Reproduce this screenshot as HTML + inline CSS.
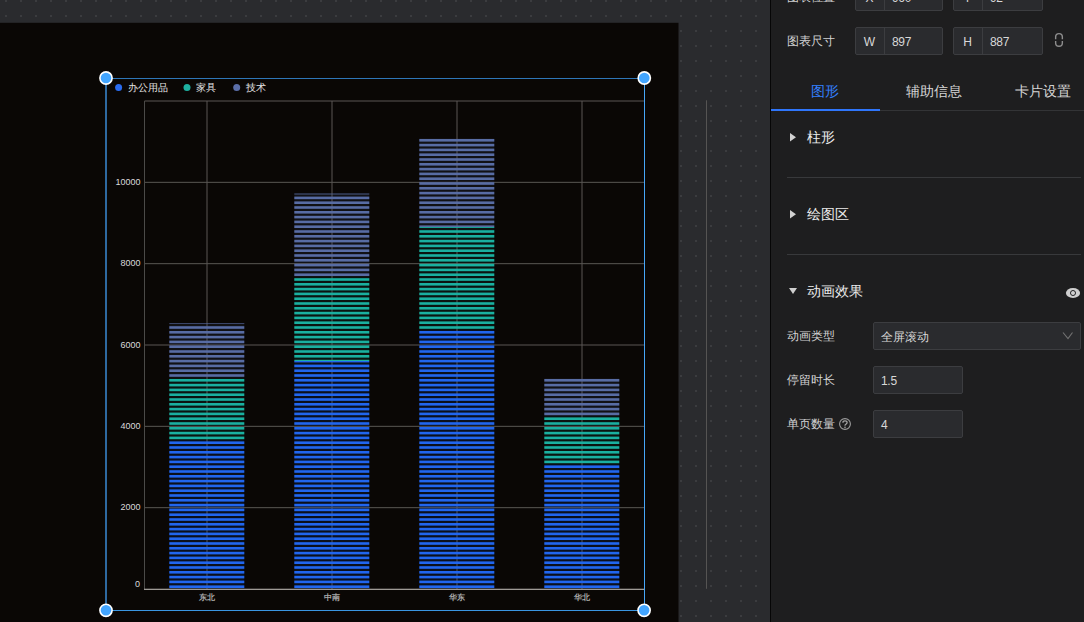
<!DOCTYPE html>
<html><head><meta charset="utf-8">
<style>
*{margin:0;padding:0;box-sizing:border-box}
html,body{width:1084px;height:622px;overflow:hidden;background:#2a2b2e;font-family:"Liberation Sans",sans-serif}
.abs{position:absolute}
#canvas{position:absolute;left:0;top:0;width:770px;height:622px}
#sep{position:absolute;left:770px;top:0;width:1px;height:622px;background:#060606}
#panel{position:absolute;left:771px;top:0;width:313px;height:622px;background:#1e1e1f;overflow:hidden;color:#d6d6d6}
.lbl{position:absolute;font-size:12px;line-height:16px;white-space:nowrap;color:#d2d2d2}
.box{position:absolute;background:#2a2b2e;border:1px solid #3c3d40;border-radius:2px}
.txt{position:absolute;font-size:12px;line-height:16px;padding-top:1px;white-space:nowrap;color:#d8d8d8}
.tab{position:absolute;top:82px;width:109px;text-align:center;font-size:14px;line-height:18px;color:#d6d6d6}
.sec{position:absolute;left:36px;font-size:14px;line-height:18px;color:#ececec}
.div{position:absolute;left:16px;width:294px;height:1px;background:#38393b}
</style></head><body>
<svg id="canvas" width="770" height="622" viewBox="0 0 770 622">
<defs>
<pattern id="dots" x="0" y="0" width="15" height="15" patternUnits="userSpaceOnUse">
<rect x="5" y="0" width="2" height="2" fill="#3b3c3f"/>
</pattern>
</defs>
<rect x="0" y="0" width="770" height="622" fill="#2a2b2e"/>
<rect x="0" y="0" width="770" height="622" fill="url(#dots)"/>
<rect x="0" y="22.8" width="678.5" height="600" fill="#0a0705"/>
<rect x="706" y="100.3" width="1" height="488.5" fill="#555453"/>

<!-- grid -->
<g fill="#5a5754">
<rect x="144.5" y="100.5" width="500" height="1"/>
<rect x="144.5" y="181.83" width="500" height="1"/>
<rect x="144.5" y="263.17" width="500" height="1"/>
<rect x="144.5" y="344.5" width="500" height="1"/>
<rect x="144.5" y="425.83" width="500" height="1"/>
<rect x="144.5" y="507.17" width="500" height="1"/>
</g>
<rect x="144" y="101" width="1" height="488" fill="#4b4a48"/>
<g fill="#5a5754">
<rect x="206.5" y="101" width="1" height="488"/>
<rect x="331.5" y="101" width="1" height="488"/>
<rect x="456.5" y="101" width="1" height="488"/>
<rect x="581.5" y="101" width="1" height="488"/>
</g>
<rect x="169.30" y="323.40" width="75.00" height="54.50" fill="rgba(90,112,168,0.1)"/>
<rect x="169.30" y="374.20" width="75.00" height="2.60" fill="#586ca4"/>
<rect x="169.30" y="369.40" width="75.00" height="2.60" fill="#586ca4"/>
<rect x="169.30" y="364.60" width="75.00" height="2.60" fill="#586ca4"/>
<rect x="169.30" y="359.80" width="75.00" height="2.60" fill="#586ca4"/>
<rect x="169.30" y="355.00" width="75.00" height="2.60" fill="#586ca4"/>
<rect x="169.30" y="350.20" width="75.00" height="2.60" fill="#586ca4"/>
<rect x="169.30" y="345.40" width="75.00" height="2.60" fill="#586ca4"/>
<rect x="169.30" y="340.60" width="75.00" height="2.60" fill="#586ca4"/>
<rect x="169.30" y="335.80" width="75.00" height="2.60" fill="#586ca4"/>
<rect x="169.30" y="331.00" width="75.00" height="2.60" fill="#586ca4"/>
<rect x="169.30" y="326.20" width="75.00" height="2.60" fill="#586ca4"/>
<rect x="169.30" y="323.40" width="75.00" height="0.60" fill="#586ca4"/>
<rect x="169.30" y="377.90" width="75.00" height="62.40" fill="rgba(26,178,162,0.08)"/>
<rect x="169.30" y="436.60" width="75.00" height="2.60" fill="#1ab0a0"/>
<rect x="169.30" y="431.80" width="75.00" height="2.60" fill="#1ab0a0"/>
<rect x="169.30" y="427.00" width="75.00" height="2.60" fill="#1ab0a0"/>
<rect x="169.30" y="422.20" width="75.00" height="2.60" fill="#1ab0a0"/>
<rect x="169.30" y="417.40" width="75.00" height="2.60" fill="#1ab0a0"/>
<rect x="169.30" y="412.60" width="75.00" height="2.60" fill="#1ab0a0"/>
<rect x="169.30" y="407.80" width="75.00" height="2.60" fill="#1ab0a0"/>
<rect x="169.30" y="403.00" width="75.00" height="2.60" fill="#1ab0a0"/>
<rect x="169.30" y="398.20" width="75.00" height="2.60" fill="#1ab0a0"/>
<rect x="169.30" y="393.40" width="75.00" height="2.60" fill="#1ab0a0"/>
<rect x="169.30" y="388.60" width="75.00" height="2.60" fill="#1ab0a0"/>
<rect x="169.30" y="383.80" width="75.00" height="2.60" fill="#1ab0a0"/>
<rect x="169.30" y="379.00" width="75.00" height="2.60" fill="#1ab0a0"/>
<rect x="169.30" y="440.30" width="75.00" height="148.70" fill="rgba(34,102,238,0.1)"/>
<rect x="169.30" y="585.40" width="75.00" height="2.60" fill="#2166ee"/>
<rect x="169.30" y="580.60" width="75.00" height="2.60" fill="#2166ee"/>
<rect x="169.30" y="575.80" width="75.00" height="2.60" fill="#2166ee"/>
<rect x="169.30" y="571.00" width="75.00" height="2.60" fill="#2166ee"/>
<rect x="169.30" y="566.20" width="75.00" height="2.60" fill="#2166ee"/>
<rect x="169.30" y="561.40" width="75.00" height="2.60" fill="#2166ee"/>
<rect x="169.30" y="556.60" width="75.00" height="2.60" fill="#2166ee"/>
<rect x="169.30" y="551.80" width="75.00" height="2.60" fill="#2166ee"/>
<rect x="169.30" y="547.00" width="75.00" height="2.60" fill="#2166ee"/>
<rect x="169.30" y="542.20" width="75.00" height="2.60" fill="#2166ee"/>
<rect x="169.30" y="537.40" width="75.00" height="2.60" fill="#2166ee"/>
<rect x="169.30" y="532.60" width="75.00" height="2.60" fill="#2166ee"/>
<rect x="169.30" y="527.80" width="75.00" height="2.60" fill="#2166ee"/>
<rect x="169.30" y="523.00" width="75.00" height="2.60" fill="#2166ee"/>
<rect x="169.30" y="518.20" width="75.00" height="2.60" fill="#2166ee"/>
<rect x="169.30" y="513.40" width="75.00" height="2.60" fill="#2166ee"/>
<rect x="169.30" y="508.60" width="75.00" height="2.60" fill="#2166ee"/>
<rect x="169.30" y="503.80" width="75.00" height="2.60" fill="#2166ee"/>
<rect x="169.30" y="499.00" width="75.00" height="2.60" fill="#2166ee"/>
<rect x="169.30" y="494.20" width="75.00" height="2.60" fill="#2166ee"/>
<rect x="169.30" y="489.40" width="75.00" height="2.60" fill="#2166ee"/>
<rect x="169.30" y="484.60" width="75.00" height="2.60" fill="#2166ee"/>
<rect x="169.30" y="479.80" width="75.00" height="2.60" fill="#2166ee"/>
<rect x="169.30" y="475.00" width="75.00" height="2.60" fill="#2166ee"/>
<rect x="169.30" y="470.20" width="75.00" height="2.60" fill="#2166ee"/>
<rect x="169.30" y="465.40" width="75.00" height="2.60" fill="#2166ee"/>
<rect x="169.30" y="460.60" width="75.00" height="2.60" fill="#2166ee"/>
<rect x="169.30" y="455.80" width="75.00" height="2.60" fill="#2166ee"/>
<rect x="169.30" y="451.00" width="75.00" height="2.60" fill="#2166ee"/>
<rect x="169.30" y="446.20" width="75.00" height="2.60" fill="#2166ee"/>
<rect x="169.30" y="441.40" width="75.00" height="2.60" fill="#2166ee"/>
<rect x="294.30" y="193.60" width="75.00" height="83.50" fill="rgba(90,112,168,0.1)"/>
<rect x="294.30" y="273.40" width="75.00" height="2.60" fill="#586ca4"/>
<rect x="294.30" y="268.60" width="75.00" height="2.60" fill="#586ca4"/>
<rect x="294.30" y="263.80" width="75.00" height="2.60" fill="#586ca4"/>
<rect x="294.30" y="259.00" width="75.00" height="2.60" fill="#586ca4"/>
<rect x="294.30" y="254.20" width="75.00" height="2.60" fill="#586ca4"/>
<rect x="294.30" y="249.40" width="75.00" height="2.60" fill="#586ca4"/>
<rect x="294.30" y="244.60" width="75.00" height="2.60" fill="#586ca4"/>
<rect x="294.30" y="239.80" width="75.00" height="2.60" fill="#586ca4"/>
<rect x="294.30" y="235.00" width="75.00" height="2.60" fill="#586ca4"/>
<rect x="294.30" y="230.20" width="75.00" height="2.60" fill="#586ca4"/>
<rect x="294.30" y="225.40" width="75.00" height="2.60" fill="#586ca4"/>
<rect x="294.30" y="220.60" width="75.00" height="2.60" fill="#586ca4"/>
<rect x="294.30" y="215.80" width="75.00" height="2.60" fill="#586ca4"/>
<rect x="294.30" y="211.00" width="75.00" height="2.60" fill="#586ca4"/>
<rect x="294.30" y="206.20" width="75.00" height="2.60" fill="#586ca4"/>
<rect x="294.30" y="201.40" width="75.00" height="2.60" fill="#586ca4"/>
<rect x="294.30" y="196.60" width="75.00" height="2.60" fill="#586ca4"/>
<rect x="294.30" y="193.60" width="75.00" height="0.80" fill="#586ca4"/>
<rect x="294.30" y="277.10" width="75.00" height="83.90" fill="rgba(26,178,162,0.08)"/>
<rect x="294.30" y="359.80" width="75.00" height="1.20" fill="#1ab0a0"/>
<rect x="294.30" y="355.00" width="75.00" height="2.60" fill="#1ab0a0"/>
<rect x="294.30" y="350.20" width="75.00" height="2.60" fill="#1ab0a0"/>
<rect x="294.30" y="345.40" width="75.00" height="2.60" fill="#1ab0a0"/>
<rect x="294.30" y="340.60" width="75.00" height="2.60" fill="#1ab0a0"/>
<rect x="294.30" y="335.80" width="75.00" height="2.60" fill="#1ab0a0"/>
<rect x="294.30" y="331.00" width="75.00" height="2.60" fill="#1ab0a0"/>
<rect x="294.30" y="326.20" width="75.00" height="2.60" fill="#1ab0a0"/>
<rect x="294.30" y="321.40" width="75.00" height="2.60" fill="#1ab0a0"/>
<rect x="294.30" y="316.60" width="75.00" height="2.60" fill="#1ab0a0"/>
<rect x="294.30" y="311.80" width="75.00" height="2.60" fill="#1ab0a0"/>
<rect x="294.30" y="307.00" width="75.00" height="2.60" fill="#1ab0a0"/>
<rect x="294.30" y="302.20" width="75.00" height="2.60" fill="#1ab0a0"/>
<rect x="294.30" y="297.40" width="75.00" height="2.60" fill="#1ab0a0"/>
<rect x="294.30" y="292.60" width="75.00" height="2.60" fill="#1ab0a0"/>
<rect x="294.30" y="287.80" width="75.00" height="2.60" fill="#1ab0a0"/>
<rect x="294.30" y="283.00" width="75.00" height="2.60" fill="#1ab0a0"/>
<rect x="294.30" y="278.20" width="75.00" height="2.60" fill="#1ab0a0"/>
<rect x="294.30" y="361.00" width="75.00" height="228.00" fill="rgba(34,102,238,0.1)"/>
<rect x="294.30" y="585.40" width="75.00" height="2.60" fill="#2166ee"/>
<rect x="294.30" y="580.60" width="75.00" height="2.60" fill="#2166ee"/>
<rect x="294.30" y="575.80" width="75.00" height="2.60" fill="#2166ee"/>
<rect x="294.30" y="571.00" width="75.00" height="2.60" fill="#2166ee"/>
<rect x="294.30" y="566.20" width="75.00" height="2.60" fill="#2166ee"/>
<rect x="294.30" y="561.40" width="75.00" height="2.60" fill="#2166ee"/>
<rect x="294.30" y="556.60" width="75.00" height="2.60" fill="#2166ee"/>
<rect x="294.30" y="551.80" width="75.00" height="2.60" fill="#2166ee"/>
<rect x="294.30" y="547.00" width="75.00" height="2.60" fill="#2166ee"/>
<rect x="294.30" y="542.20" width="75.00" height="2.60" fill="#2166ee"/>
<rect x="294.30" y="537.40" width="75.00" height="2.60" fill="#2166ee"/>
<rect x="294.30" y="532.60" width="75.00" height="2.60" fill="#2166ee"/>
<rect x="294.30" y="527.80" width="75.00" height="2.60" fill="#2166ee"/>
<rect x="294.30" y="523.00" width="75.00" height="2.60" fill="#2166ee"/>
<rect x="294.30" y="518.20" width="75.00" height="2.60" fill="#2166ee"/>
<rect x="294.30" y="513.40" width="75.00" height="2.60" fill="#2166ee"/>
<rect x="294.30" y="508.60" width="75.00" height="2.60" fill="#2166ee"/>
<rect x="294.30" y="503.80" width="75.00" height="2.60" fill="#2166ee"/>
<rect x="294.30" y="499.00" width="75.00" height="2.60" fill="#2166ee"/>
<rect x="294.30" y="494.20" width="75.00" height="2.60" fill="#2166ee"/>
<rect x="294.30" y="489.40" width="75.00" height="2.60" fill="#2166ee"/>
<rect x="294.30" y="484.60" width="75.00" height="2.60" fill="#2166ee"/>
<rect x="294.30" y="479.80" width="75.00" height="2.60" fill="#2166ee"/>
<rect x="294.30" y="475.00" width="75.00" height="2.60" fill="#2166ee"/>
<rect x="294.30" y="470.20" width="75.00" height="2.60" fill="#2166ee"/>
<rect x="294.30" y="465.40" width="75.00" height="2.60" fill="#2166ee"/>
<rect x="294.30" y="460.60" width="75.00" height="2.60" fill="#2166ee"/>
<rect x="294.30" y="455.80" width="75.00" height="2.60" fill="#2166ee"/>
<rect x="294.30" y="451.00" width="75.00" height="2.60" fill="#2166ee"/>
<rect x="294.30" y="446.20" width="75.00" height="2.60" fill="#2166ee"/>
<rect x="294.30" y="441.40" width="75.00" height="2.60" fill="#2166ee"/>
<rect x="294.30" y="436.60" width="75.00" height="2.60" fill="#2166ee"/>
<rect x="294.30" y="431.80" width="75.00" height="2.60" fill="#2166ee"/>
<rect x="294.30" y="427.00" width="75.00" height="2.60" fill="#2166ee"/>
<rect x="294.30" y="422.20" width="75.00" height="2.60" fill="#2166ee"/>
<rect x="294.30" y="417.40" width="75.00" height="2.60" fill="#2166ee"/>
<rect x="294.30" y="412.60" width="75.00" height="2.60" fill="#2166ee"/>
<rect x="294.30" y="407.80" width="75.00" height="2.60" fill="#2166ee"/>
<rect x="294.30" y="403.00" width="75.00" height="2.60" fill="#2166ee"/>
<rect x="294.30" y="398.20" width="75.00" height="2.60" fill="#2166ee"/>
<rect x="294.30" y="393.40" width="75.00" height="2.60" fill="#2166ee"/>
<rect x="294.30" y="388.60" width="75.00" height="2.60" fill="#2166ee"/>
<rect x="294.30" y="383.80" width="75.00" height="2.60" fill="#2166ee"/>
<rect x="294.30" y="379.00" width="75.00" height="2.60" fill="#2166ee"/>
<rect x="294.30" y="374.20" width="75.00" height="2.60" fill="#2166ee"/>
<rect x="294.30" y="369.40" width="75.00" height="2.60" fill="#2166ee"/>
<rect x="294.30" y="364.60" width="75.00" height="2.60" fill="#2166ee"/>
<rect x="294.30" y="361.00" width="75.00" height="1.40" fill="#2166ee"/>
<rect x="419.30" y="138.30" width="75.00" height="88.80" fill="rgba(90,112,168,0.1)"/>
<rect x="419.30" y="225.40" width="75.00" height="1.70" fill="#586ca4"/>
<rect x="419.30" y="220.60" width="75.00" height="2.60" fill="#586ca4"/>
<rect x="419.30" y="215.80" width="75.00" height="2.60" fill="#586ca4"/>
<rect x="419.30" y="211.00" width="75.00" height="2.60" fill="#586ca4"/>
<rect x="419.30" y="206.20" width="75.00" height="2.60" fill="#586ca4"/>
<rect x="419.30" y="201.40" width="75.00" height="2.60" fill="#586ca4"/>
<rect x="419.30" y="196.60" width="75.00" height="2.60" fill="#586ca4"/>
<rect x="419.30" y="191.80" width="75.00" height="2.60" fill="#586ca4"/>
<rect x="419.30" y="187.00" width="75.00" height="2.60" fill="#586ca4"/>
<rect x="419.30" y="182.20" width="75.00" height="2.60" fill="#586ca4"/>
<rect x="419.30" y="177.40" width="75.00" height="2.60" fill="#586ca4"/>
<rect x="419.30" y="172.60" width="75.00" height="2.60" fill="#586ca4"/>
<rect x="419.30" y="167.80" width="75.00" height="2.60" fill="#586ca4"/>
<rect x="419.30" y="163.00" width="75.00" height="2.60" fill="#586ca4"/>
<rect x="419.30" y="158.20" width="75.00" height="2.60" fill="#586ca4"/>
<rect x="419.30" y="153.40" width="75.00" height="2.60" fill="#586ca4"/>
<rect x="419.30" y="148.60" width="75.00" height="2.60" fill="#586ca4"/>
<rect x="419.30" y="143.80" width="75.00" height="2.60" fill="#586ca4"/>
<rect x="419.30" y="139.00" width="75.00" height="2.60" fill="#586ca4"/>
<rect x="419.30" y="227.10" width="75.00" height="102.80" fill="rgba(26,178,162,0.08)"/>
<rect x="419.30" y="326.20" width="75.00" height="2.60" fill="#1ab0a0"/>
<rect x="419.30" y="321.40" width="75.00" height="2.60" fill="#1ab0a0"/>
<rect x="419.30" y="316.60" width="75.00" height="2.60" fill="#1ab0a0"/>
<rect x="419.30" y="311.80" width="75.00" height="2.60" fill="#1ab0a0"/>
<rect x="419.30" y="307.00" width="75.00" height="2.60" fill="#1ab0a0"/>
<rect x="419.30" y="302.20" width="75.00" height="2.60" fill="#1ab0a0"/>
<rect x="419.30" y="297.40" width="75.00" height="2.60" fill="#1ab0a0"/>
<rect x="419.30" y="292.60" width="75.00" height="2.60" fill="#1ab0a0"/>
<rect x="419.30" y="287.80" width="75.00" height="2.60" fill="#1ab0a0"/>
<rect x="419.30" y="283.00" width="75.00" height="2.60" fill="#1ab0a0"/>
<rect x="419.30" y="278.20" width="75.00" height="2.60" fill="#1ab0a0"/>
<rect x="419.30" y="273.40" width="75.00" height="2.60" fill="#1ab0a0"/>
<rect x="419.30" y="268.60" width="75.00" height="2.60" fill="#1ab0a0"/>
<rect x="419.30" y="263.80" width="75.00" height="2.60" fill="#1ab0a0"/>
<rect x="419.30" y="259.00" width="75.00" height="2.60" fill="#1ab0a0"/>
<rect x="419.30" y="254.20" width="75.00" height="2.60" fill="#1ab0a0"/>
<rect x="419.30" y="249.40" width="75.00" height="2.60" fill="#1ab0a0"/>
<rect x="419.30" y="244.60" width="75.00" height="2.60" fill="#1ab0a0"/>
<rect x="419.30" y="239.80" width="75.00" height="2.60" fill="#1ab0a0"/>
<rect x="419.30" y="235.00" width="75.00" height="2.60" fill="#1ab0a0"/>
<rect x="419.30" y="230.20" width="75.00" height="2.60" fill="#1ab0a0"/>
<rect x="419.30" y="227.10" width="75.00" height="0.90" fill="#1ab0a0"/>
<rect x="419.30" y="329.90" width="75.00" height="259.10" fill="rgba(34,102,238,0.1)"/>
<rect x="419.30" y="585.40" width="75.00" height="2.60" fill="#2166ee"/>
<rect x="419.30" y="580.60" width="75.00" height="2.60" fill="#2166ee"/>
<rect x="419.30" y="575.80" width="75.00" height="2.60" fill="#2166ee"/>
<rect x="419.30" y="571.00" width="75.00" height="2.60" fill="#2166ee"/>
<rect x="419.30" y="566.20" width="75.00" height="2.60" fill="#2166ee"/>
<rect x="419.30" y="561.40" width="75.00" height="2.60" fill="#2166ee"/>
<rect x="419.30" y="556.60" width="75.00" height="2.60" fill="#2166ee"/>
<rect x="419.30" y="551.80" width="75.00" height="2.60" fill="#2166ee"/>
<rect x="419.30" y="547.00" width="75.00" height="2.60" fill="#2166ee"/>
<rect x="419.30" y="542.20" width="75.00" height="2.60" fill="#2166ee"/>
<rect x="419.30" y="537.40" width="75.00" height="2.60" fill="#2166ee"/>
<rect x="419.30" y="532.60" width="75.00" height="2.60" fill="#2166ee"/>
<rect x="419.30" y="527.80" width="75.00" height="2.60" fill="#2166ee"/>
<rect x="419.30" y="523.00" width="75.00" height="2.60" fill="#2166ee"/>
<rect x="419.30" y="518.20" width="75.00" height="2.60" fill="#2166ee"/>
<rect x="419.30" y="513.40" width="75.00" height="2.60" fill="#2166ee"/>
<rect x="419.30" y="508.60" width="75.00" height="2.60" fill="#2166ee"/>
<rect x="419.30" y="503.80" width="75.00" height="2.60" fill="#2166ee"/>
<rect x="419.30" y="499.00" width="75.00" height="2.60" fill="#2166ee"/>
<rect x="419.30" y="494.20" width="75.00" height="2.60" fill="#2166ee"/>
<rect x="419.30" y="489.40" width="75.00" height="2.60" fill="#2166ee"/>
<rect x="419.30" y="484.60" width="75.00" height="2.60" fill="#2166ee"/>
<rect x="419.30" y="479.80" width="75.00" height="2.60" fill="#2166ee"/>
<rect x="419.30" y="475.00" width="75.00" height="2.60" fill="#2166ee"/>
<rect x="419.30" y="470.20" width="75.00" height="2.60" fill="#2166ee"/>
<rect x="419.30" y="465.40" width="75.00" height="2.60" fill="#2166ee"/>
<rect x="419.30" y="460.60" width="75.00" height="2.60" fill="#2166ee"/>
<rect x="419.30" y="455.80" width="75.00" height="2.60" fill="#2166ee"/>
<rect x="419.30" y="451.00" width="75.00" height="2.60" fill="#2166ee"/>
<rect x="419.30" y="446.20" width="75.00" height="2.60" fill="#2166ee"/>
<rect x="419.30" y="441.40" width="75.00" height="2.60" fill="#2166ee"/>
<rect x="419.30" y="436.60" width="75.00" height="2.60" fill="#2166ee"/>
<rect x="419.30" y="431.80" width="75.00" height="2.60" fill="#2166ee"/>
<rect x="419.30" y="427.00" width="75.00" height="2.60" fill="#2166ee"/>
<rect x="419.30" y="422.20" width="75.00" height="2.60" fill="#2166ee"/>
<rect x="419.30" y="417.40" width="75.00" height="2.60" fill="#2166ee"/>
<rect x="419.30" y="412.60" width="75.00" height="2.60" fill="#2166ee"/>
<rect x="419.30" y="407.80" width="75.00" height="2.60" fill="#2166ee"/>
<rect x="419.30" y="403.00" width="75.00" height="2.60" fill="#2166ee"/>
<rect x="419.30" y="398.20" width="75.00" height="2.60" fill="#2166ee"/>
<rect x="419.30" y="393.40" width="75.00" height="2.60" fill="#2166ee"/>
<rect x="419.30" y="388.60" width="75.00" height="2.60" fill="#2166ee"/>
<rect x="419.30" y="383.80" width="75.00" height="2.60" fill="#2166ee"/>
<rect x="419.30" y="379.00" width="75.00" height="2.60" fill="#2166ee"/>
<rect x="419.30" y="374.20" width="75.00" height="2.60" fill="#2166ee"/>
<rect x="419.30" y="369.40" width="75.00" height="2.60" fill="#2166ee"/>
<rect x="419.30" y="364.60" width="75.00" height="2.60" fill="#2166ee"/>
<rect x="419.30" y="359.80" width="75.00" height="2.60" fill="#2166ee"/>
<rect x="419.30" y="355.00" width="75.00" height="2.60" fill="#2166ee"/>
<rect x="419.30" y="350.20" width="75.00" height="2.60" fill="#2166ee"/>
<rect x="419.30" y="345.40" width="75.00" height="2.60" fill="#2166ee"/>
<rect x="419.30" y="340.60" width="75.00" height="2.60" fill="#2166ee"/>
<rect x="419.30" y="335.80" width="75.00" height="2.60" fill="#2166ee"/>
<rect x="419.30" y="331.00" width="75.00" height="2.60" fill="#2166ee"/>
<rect x="544.30" y="378.30" width="75.00" height="38.00" fill="rgba(90,112,168,0.1)"/>
<rect x="544.30" y="412.60" width="75.00" height="2.60" fill="#586ca4"/>
<rect x="544.30" y="407.80" width="75.00" height="2.60" fill="#586ca4"/>
<rect x="544.30" y="403.00" width="75.00" height="2.60" fill="#586ca4"/>
<rect x="544.30" y="398.20" width="75.00" height="2.60" fill="#586ca4"/>
<rect x="544.30" y="393.40" width="75.00" height="2.60" fill="#586ca4"/>
<rect x="544.30" y="388.60" width="75.00" height="2.60" fill="#586ca4"/>
<rect x="544.30" y="383.80" width="75.00" height="2.60" fill="#586ca4"/>
<rect x="544.30" y="379.00" width="75.00" height="2.60" fill="#586ca4"/>
<rect x="544.30" y="416.30" width="75.00" height="48.00" fill="rgba(26,178,162,0.08)"/>
<rect x="544.30" y="460.60" width="75.00" height="2.60" fill="#1ab0a0"/>
<rect x="544.30" y="455.80" width="75.00" height="2.60" fill="#1ab0a0"/>
<rect x="544.30" y="451.00" width="75.00" height="2.60" fill="#1ab0a0"/>
<rect x="544.30" y="446.20" width="75.00" height="2.60" fill="#1ab0a0"/>
<rect x="544.30" y="441.40" width="75.00" height="2.60" fill="#1ab0a0"/>
<rect x="544.30" y="436.60" width="75.00" height="2.60" fill="#1ab0a0"/>
<rect x="544.30" y="431.80" width="75.00" height="2.60" fill="#1ab0a0"/>
<rect x="544.30" y="427.00" width="75.00" height="2.60" fill="#1ab0a0"/>
<rect x="544.30" y="422.20" width="75.00" height="2.60" fill="#1ab0a0"/>
<rect x="544.30" y="417.40" width="75.00" height="2.60" fill="#1ab0a0"/>
<rect x="544.30" y="464.30" width="75.00" height="124.70" fill="rgba(34,102,238,0.1)"/>
<rect x="544.30" y="585.40" width="75.00" height="2.60" fill="#2166ee"/>
<rect x="544.30" y="580.60" width="75.00" height="2.60" fill="#2166ee"/>
<rect x="544.30" y="575.80" width="75.00" height="2.60" fill="#2166ee"/>
<rect x="544.30" y="571.00" width="75.00" height="2.60" fill="#2166ee"/>
<rect x="544.30" y="566.20" width="75.00" height="2.60" fill="#2166ee"/>
<rect x="544.30" y="561.40" width="75.00" height="2.60" fill="#2166ee"/>
<rect x="544.30" y="556.60" width="75.00" height="2.60" fill="#2166ee"/>
<rect x="544.30" y="551.80" width="75.00" height="2.60" fill="#2166ee"/>
<rect x="544.30" y="547.00" width="75.00" height="2.60" fill="#2166ee"/>
<rect x="544.30" y="542.20" width="75.00" height="2.60" fill="#2166ee"/>
<rect x="544.30" y="537.40" width="75.00" height="2.60" fill="#2166ee"/>
<rect x="544.30" y="532.60" width="75.00" height="2.60" fill="#2166ee"/>
<rect x="544.30" y="527.80" width="75.00" height="2.60" fill="#2166ee"/>
<rect x="544.30" y="523.00" width="75.00" height="2.60" fill="#2166ee"/>
<rect x="544.30" y="518.20" width="75.00" height="2.60" fill="#2166ee"/>
<rect x="544.30" y="513.40" width="75.00" height="2.60" fill="#2166ee"/>
<rect x="544.30" y="508.60" width="75.00" height="2.60" fill="#2166ee"/>
<rect x="544.30" y="503.80" width="75.00" height="2.60" fill="#2166ee"/>
<rect x="544.30" y="499.00" width="75.00" height="2.60" fill="#2166ee"/>
<rect x="544.30" y="494.20" width="75.00" height="2.60" fill="#2166ee"/>
<rect x="544.30" y="489.40" width="75.00" height="2.60" fill="#2166ee"/>
<rect x="544.30" y="484.60" width="75.00" height="2.60" fill="#2166ee"/>
<rect x="544.30" y="479.80" width="75.00" height="2.60" fill="#2166ee"/>
<rect x="544.30" y="475.00" width="75.00" height="2.60" fill="#2166ee"/>
<rect x="544.30" y="470.20" width="75.00" height="2.60" fill="#2166ee"/>
<rect x="544.30" y="465.40" width="75.00" height="2.60" fill="#2166ee"/>
<rect x="144" y="588.7" width="500.5" height="1.3" fill="#9e9a95"/>
<!-- y labels -->
<g font-family="Liberation Sans, sans-serif" font-size="9" fill="#dadada" text-anchor="end">
<text x="140.5" y="184.9">10000</text>
<text x="140.5" y="266.2">8000</text>
<text x="140.5" y="347.5">6000</text>
<text x="140.5" y="428.8">4000</text>
<text x="140.5" y="510.2">2000</text>
<text x="140.1" y="586.6">0</text>
</g>
<g font-family="Liberation Sans, sans-serif" font-size="8" font-weight="bold" fill="#a8a8a8" text-anchor="middle">
<text x="207.2" y="600">东北</text>
<text x="332" y="600">中南</text>
<text x="456.8" y="600">华东</text>
<text x="581.5" y="600">华北</text>
</g>
<!-- legend -->
<circle cx="118.6" cy="87.6" r="3.5" fill="#2a6cf0"/>
<circle cx="187" cy="87.6" r="3.5" fill="#1eb0a0"/>
<circle cx="236.7" cy="87.6" r="3.5" fill="#5b6ea8"/>
<g font-family="Liberation Sans, sans-serif" font-size="10" fill="#e6e6e6">
<text x="128" y="91.3">办公用品</text>
<text x="196" y="91.3">家具</text>
<text x="245.6" y="91.3">技术</text>
</g>
<!-- selection -->
<rect x="105" y="78" width="2" height="532" fill="#2e69a0"/>
<rect x="106" y="78" width="538" height="1" fill="#2e76b8"/>
<rect x="106" y="610" width="538" height="1" fill="#3a96e1"/>
<rect x="644" y="78" width="1" height="532" fill="#46a6f8"/>
<g fill="#42a5ff" stroke="#ffffff" stroke-width="1.6">
<circle cx="106" cy="78" r="6.1"/>
<circle cx="644.3" cy="78" r="6.1"/>
<circle cx="106" cy="610.3" r="6.1"/>
<circle cx="644.1" cy="610.3" r="6.1"/>
</g>
</svg>
<div id="sep"></div>
<div id="panel">
  <!-- row 1: 图表位置 (cut) -->
  <div class="lbl" style="left:16px;top:-11px">图表位置</div>
  <div class="box" style="left:84px;top:-17px;width:88px;height:28px"></div>
  <div class="abs" style="left:113px;top:-17px;width:1px;height:28px;background:#3c3d40"></div>
  <div class="txt" style="left:84px;top:-11px;width:29px;text-align:center">X</div>
  <div class="txt" style="left:121px;top:-11px;letter-spacing:-0.3px">960</div>
  <div class="box" style="left:182px;top:-17px;width:90px;height:28px"></div>
  <div class="abs" style="left:211px;top:-17px;width:1px;height:28px;background:#3c3d40"></div>
  <div class="txt" style="left:182px;top:-11px;width:29px;text-align:center">Y</div>
  <div class="txt" style="left:219px;top:-11px;letter-spacing:-0.3px">92</div>
  <!-- row 2: 图表尺寸 -->
  <div class="lbl" style="left:16px;top:33px">图表尺寸</div>
  <div class="box" style="left:84px;top:27px;width:88px;height:28px"></div>
  <div class="abs" style="left:113px;top:27px;width:1px;height:28px;background:#3c3d40"></div>
  <div class="txt" style="left:84px;top:33px;width:29px;text-align:center">W</div>
  <div class="txt" style="left:121px;top:33px;letter-spacing:-0.3px">897</div>
  <div class="box" style="left:182px;top:27px;width:90px;height:28px"></div>
  <div class="abs" style="left:211px;top:27px;width:1px;height:28px;background:#3c3d40"></div>
  <div class="txt" style="left:182px;top:33px;width:29px;text-align:center">H</div>
  <div class="txt" style="left:219px;top:33px;letter-spacing:-0.3px">887</div>
  <svg class="abs" style="left:283px;top:32px" width="10" height="16" viewBox="0 0 10 16">
    <path d="M1.65 7.3 V4.95 a3.35 3.35 0 0 1 6.7 0 V7.3 M1.65 9.1 V10.95 a3.35 3.35 0 0 0 6.7 0 V9.1" fill="none" stroke="#8e8e8e" stroke-width="1.4"/>
  </svg>
  <!-- tabs -->
  <div class="tab" style="left:-1px;color:#3380ff">图形</div>
  <div class="tab" style="left:108px">辅助信息</div>
  <div class="tab" style="left:217.5px">卡片设置</div>
  <div class="abs" style="left:0;top:110px;width:313px;height:1px;background:#333436"></div>
  <div class="abs" style="left:0;top:109px;width:109px;height:2px;background:#2f76fa"></div>
  <!-- sections -->
  <svg class="abs" style="left:19px;top:132.6px" width="7" height="9" viewBox="0 0 7 9"><path d="M0 0 L6 4.2 L0 8.4Z" fill="#d2d2d2"/></svg>
  <div class="sec" style="top:128px">柱形</div>
  <div class="div" style="top:177px"></div>
  <svg class="abs" style="left:19px;top:209.6px" width="7" height="9" viewBox="0 0 7 9"><path d="M0 0 L6 4.2 L0 8.4Z" fill="#d2d2d2"/></svg>
  <div class="sec" style="top:205px">绘图区</div>
  <div class="div" style="top:254px"></div>
  <svg class="abs" style="left:18px;top:288px" width="9" height="7" viewBox="0 0 9 7"><path d="M0 0 L8 0 L4 6Z" fill="#cfcfcf"/></svg>
  <div class="sec" style="top:282px">动画效果</div>
  <svg class="abs" style="left:294px;top:287px" width="16" height="12" viewBox="0 0 16 12">
    <ellipse cx="8" cy="6" rx="7.1" ry="5.1" fill="#cfcfcf"/>
    <circle cx="8" cy="6" r="2.5" fill="none" stroke="#1e1e21" stroke-width="1"/>
    <circle cx="8" cy="6" r="1.5" fill="#cfcfcf"/>
  </svg>
  <!-- rows -->
  <div class="lbl" style="left:16px;top:328px">动画类型</div>
  <div class="box" style="left:102px;top:322px;width:208px;height:28px"></div>
  <div class="txt" style="left:110px;top:328px">全屏滚动</div>
  <svg class="abs" style="left:291px;top:331px" width="12" height="9" viewBox="0 0 12 9"><path d="M1 1.5 L6 7.5 L10.5 1.5" fill="none" stroke="#727272" stroke-width="1.1"/></svg>
  <div class="lbl" style="left:16px;top:372px">停留时长</div>
  <div class="box" style="left:102px;top:366px;width:90px;height:28px"></div>
  <div class="txt" style="left:110px;top:372px;letter-spacing:-0.3px">1.5</div>
  <div class="lbl" style="left:16px;top:416px">单页数量</div>
  <svg class="abs" style="left:68px;top:418px" width="12" height="12" viewBox="0 0 12 12">
    <circle cx="6" cy="6" r="5.4" fill="none" stroke="#9c9c9c" stroke-width="1.1"/>
    <path d="M3.9 4.7 C3.9 3.4 4.8 2.9 6 2.9 C7.2 2.9 8.1 3.6 8.1 4.6 C8.1 5.6 7.3 5.9 6.8 6.2 C6.2 6.5 6 6.9 6 7.7" fill="none" stroke="#a4a4a4" stroke-width="1.25"/>
    <circle cx="6" cy="9.2" r="0.8" fill="#a4a4a4"/>
  </svg>
  <div class="box" style="left:102px;top:410px;width:90px;height:28px"></div>
  <div class="txt" style="left:110px;top:416px">4</div>
</div>
</body></html>
